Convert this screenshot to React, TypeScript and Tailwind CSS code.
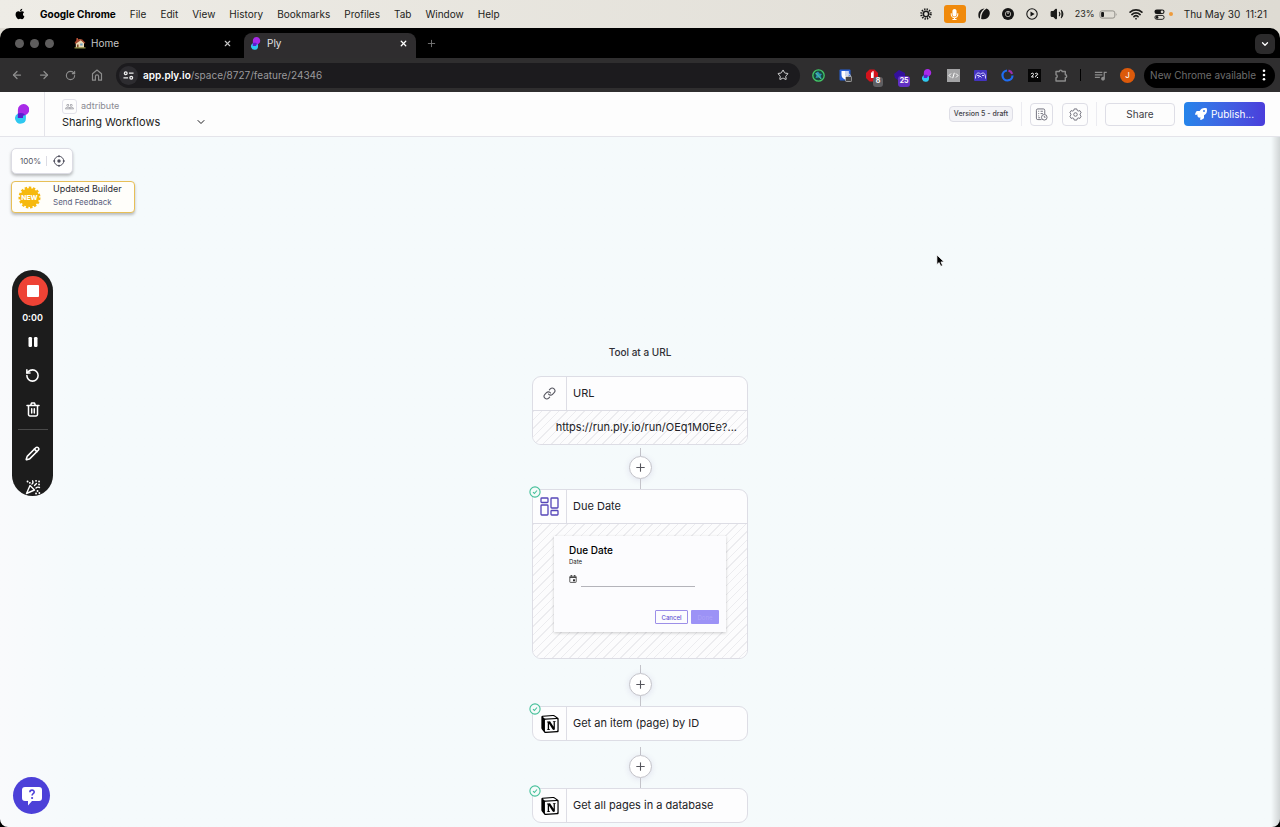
import type { ReactNode } from 'react';
import {
  ArrowLeft,
  ArrowRight,
  ChevronDown,
  CirclePlay,
  Link,
  Pencil,
  Plus,
  RotateCcw,
  RotateCw,
  Star,
  Volume2,
  Wifi,
  X,
} from 'lucide-react';
import { FaApple, FaMicrophone, FaRocket } from 'react-icons/fa';
import { MdOutlineQueueMusic, MdPeopleOutline } from 'react-icons/md';
import { SiNotion } from 'react-icons/si';

const menus = ['File', 'Edit', 'View', 'History', 'Bookmarks', 'Profiles', 'Tab', 'Window', 'Help'];

function PlyLogo({ className }: { className: string }) {
  return (
    <svg viewBox="0 0 14 20" className={className} aria-hidden="true">
      <path d="M3 9.500A5.400 5.400 0 1 0 10.900 14V9.500z" fill="#2fc8f0" />
      <path d="M2.900 14V5.800A5.700 5.700 0 1 1 8 11.400V14z" fill="#a82be8" />
      <path d="M2.900 9.600c1.800-1 4-.9 5.600 0l1.600 1.500c-.7.3-1.400.4-2.100.3V14H2.900z" fill="#5a20cf" />
    </svg>
  );
}

function HouseIcon() {
  return (
    <svg viewBox="0 0 12 12" className="size-3 shrink-0" aria-hidden="true">
      <path d="M1.800 5.500 6 2l4 3.500V11H1.800z" fill="#ead9b5" />
      <path d="M0.500 6 3 2.200h5L11.500 6l-1 .5L6.800 3.200 1.800 6.800z" fill="#a5482f" />
      <path d="M2.500 1h1.400v2.200H2.500z" fill="#c4573b" />
      <path d="M3 7.500h1.600V11H3z" fill="#7c4a2c" />
      <path d="M6.200 6.500h2.400v2H6.200z" fill="#6d9fc4" />
      <path d="M.5 10.200h11v1.300H.5z" fill="#8a8a40" />
    </svg>
  );
}

/* ---------- macOS menu bar ---------- */

function MenuBar() {
  return (
    <div className="flex h-7 items-center justify-between bg-linear-to-r from-[#eeece6] to-[#dedbd3] pl-[14px] pr-[13px] text-[10px] text-[#1d1d1b]">
      <nav className="flex items-center gap-[14px]">
        <FaApple size={12} className="text-black" />
        <span className="font-bold text-black">Google Chrome</span>
        {menus.map((m) => (
          <span key={m}>{m}</span>
        ))}
      </nav>
      <div className="flex items-center gap-[11px]">
        <div className="flex items-center gap-3">
          <svg viewBox="0 0 14 14" className="size-3" fill="none" stroke="#161616" aria-hidden="true">
            <circle cx="7" cy="7" r="3" strokeWidth="1.600" />
            <circle cx="7" cy="7" r="5.400" strokeWidth="2.600" strokeDasharray="1.500 1.330" />
          </svg>
          <span className="flex h-[18px] w-[22px] items-center justify-center rounded-[3px] bg-[#f08a0c] text-white">
            <FaMicrophone size={11} />
          </span>
          <svg viewBox="0 0 12 12" className="size-3" fill="#161616" aria-hidden="true">
            <path d="M.7 9.500C-.5 5 1.500 1 6.500.5 3 3.200 1.700 6 2 10.800z" />
            <path d="M3.200 11C3 6.500 5 2.500 8.500.500c3 .8 4 4 2.800 7C10.200 10.400 7 12 3.200 11z" />
          </svg>
          <svg viewBox="0 0 12 12" className="size-3" aria-hidden="true">
            <circle cx="6" cy="6" r="6" fill="#161616" />
            <circle cx="6" cy="6" r="2.700" fill="none" stroke="#aaa8a2" />
            <path d="M6 3.500V6" stroke="#e5e3dd" strokeWidth="1" />
          </svg>
          <svg viewBox="0 0 12 12" className="size-3" aria-hidden="true">
            <circle cx="6" cy="6" r="5.200" fill="none" stroke="#161616" strokeWidth="1.100" />
            <path d="M4.500 3.600v4.800L8.600 6z" fill="#161616" />
          </svg>
          <Volume2 size={14} fill="#1d1d1b" strokeWidth={2} />
        </div>
        <div className="flex items-center gap-1 text-[9px]">
          <span>23%</span>
          <svg viewBox="0 0 20 10" className="h-[9px] w-[19px]" aria-hidden="true">
            <rect x=".5" y="1" width="16.500" height="8" rx="2.200" fill="none" stroke="#8a8882" />
            <rect x="1.800" y="2.300" width="3.200" height="5.400" rx="1" fill="#161616" />
            <path d="M18.200 3.700v2.600c1-.3 1-2.300 0-2.600z" fill="#8a8882" />
          </svg>
        </div>
        <Wifi size={14} strokeWidth={3} />
        <div className="flex items-center gap-1">
          <svg viewBox="0 0 12 12" className="size-[11px]" aria-hidden="true">
            <rect x=".5" y=".5" width="11" height="5" rx="2.500" fill="#161616" />
            <circle cx="8.800" cy="3" r="1.500" fill="#dedbd3" />
            <rect x="1" y="7" width="10" height="4.300" rx="2.100" fill="none" stroke="#161616" />
            <circle cx="3.300" cy="9.200" r="1.500" fill="#161616" />
          </svg>
          <span className="size-1 rounded-full bg-[#ee9b3c]" />
        </div>
        <span className="whitespace-pre">Thu May 30  11:21</span>
      </div>
    </div>
  );
}

/* ---------- browser chrome ---------- */

function TabStrip() {
  return (
    <div className="flex h-[30px] items-end rounded-t-[10px] bg-black pl-[15px] text-[10px]">
      <div className="flex h-[30px] items-center gap-[6px]">
        <span className="size-[9px] rounded-full bg-[#5e5d5d]" />
        <span className="size-[9px] rounded-full bg-[#5e5d5d]" />
        <span className="size-[9px] rounded-full bg-[#5e5d5d]" />
      </div>
      <div className="ml-5 flex h-[30px] w-[158px] items-center gap-[5px] text-[#c6c6c6]">
        <HouseIcon />
        <span className="flex-1">Home</span>
        <button aria-label="Close Home"><X size={9} strokeWidth={3} /></button>
      </div>
      <div className="ml-3 flex h-[25px] w-[172px] items-center gap-[6px] rounded-t-lg bg-[#2f2d2f] pb-1 pl-[6px] pr-2 text-[#e2e2e2]">
        <PlyLogo className="h-[13px] w-[11px]" />
        <span className="flex-1">Ply</span>
        <button aria-label="Close Ply" className="text-white"><X size={9} strokeWidth={3.500} /></button>
      </div>
      <button aria-label="New tab" className="ml-[10px] flex h-[30px] items-center text-[#777]">
        <Plus size={11} />
      </button>
      <button
        aria-label="Search tabs"
        className="mb-1 ml-auto mr-[5px] flex size-5 items-center justify-center rounded-md bg-[#2c2b2c] text-white"
      >
        <ChevronDown size={10} strokeWidth={3} />
      </button>
    </div>
  );
}

function Extensions() {
  return (
    <div className="flex items-center gap-[14px] text-[#8b8b8b] *:size-[13px] *:shrink-0">
      <svg viewBox="0 0 13 13" aria-hidden="true">
        <circle cx="6.500" cy="6.500" r="5.700" fill="#17473d" stroke="#43c667" strokeWidth="1.300" />
        <path d="M3 4.500 6 2.500l1.500 2L10 5 8.500 7l1.500 3-3-1.500L3.500 9l1-2.500z" fill="#2f91b5" />
        <path d="m4 4 5 6" stroke="#5be07e" strokeWidth=".8" />
      </svg>
      <svg viewBox="0 0 13 13" aria-hidden="true">
        <rect x=".5" y=".5" width="11" height="11" rx="1" fill="#2760d8" />
        <path d="M2.500 2h7v4c0 2-1.500 3.500-3.500 4.500C4 9.500 2.500 8 2.500 6z" fill="#fff" />
        <path d="M6 2h3.500v5H6z" fill="#c9d6f2" />
        <rect x="6.500" y="7.500" width="6.200" height="5" rx="1" fill="#444" stroke="#ddd" strokeWidth=".6" />
        <path d="M8 7.500V6.600a1.600 1.600 0 0 1 3.200 0v.9" stroke="#ddd" fill="none" />
      </svg>
      <div className="relative">
        <svg viewBox="0 0 13 13" aria-hidden="true">
          <path d="M3.500.5h5L12 4v5l-3.500 3.500h-5L0 9V4z" fill="#d3131c" />
          <path d="M5 9V4c0-.9 1.300-.9 1.300 0V2.600c0-.9 1.400-.9 1.400 0V9z" fill="#fff" />
        </svg>
        <span className="absolute -bottom-[5px] -right-[4px] flex size-[10px] items-center justify-center rounded-[3px] bg-[#5f5f62] text-[7px] font-bold text-white">
          8
        </span>
      </div>
      <div className="relative">
        <svg viewBox="0 0 13 13" aria-hidden="true">
          <path d="m1 5 5-4 6 3v6L6 12 2 9z" fill="#33109c" />
        </svg>
        <span className="absolute -bottom-[5px] -right-[4px] flex h-[11px] w-3 items-center justify-center rounded-[3px] bg-[#6230c4] text-[7px] font-bold text-white">
          25
        </span>
      </div>
      <PlyLogo className="" />
      <svg viewBox="0 0 13 13" aria-hidden="true">
        <rect width="13" height="13" fill="#a3a3a5" />
        <path d="M4 4.500 2 6.500l2 2M9 4.500l2 2-2 2M7.300 3.800 5.700 9.200" fill="none" stroke="#fff" />
      </svg>
      <svg viewBox="0 0 13 13" aria-hidden="true">
        <rect y="1" width="13" height="11" rx="1" fill="#4433c0" />
        <path d="M1.500 9.500C1.500 5 3 4 4.500 4s1.500 1 2 1 1-1 2.500-1 2.500 1.500 2.500 5.500M3 6.500h2.500M8 6.500h2M4 8.500l2-1.500 1.500 1.500" fill="none" stroke="#d9d4ff" />
      </svg>
      <svg viewBox="0 0 13 13" fill="none" strokeWidth="2.200" aria-hidden="true">
        <path d="M6 1.500a5 5 0 1 0 5.500 5" stroke="#1f6df2" />
        <path d="M7.500 1.600a5 5 0 0 1 3.700 3.200" stroke="#9b2fae" />
      </svg>
      <svg viewBox="0 0 13 13" aria-hidden="true">
        <rect width="13" height="13" fill="#050505" />
        <path d="M3 5.200c.5-1.500 3-1.200 2.500.3L3.500 8h2.300M7 5c1-1.500 3.500-.7 2.500.8L8 6.500 7.500 8.200M9 8.500h1" fill="none" stroke="#fff" />
      </svg>
      <svg viewBox="0 0 13 13" fill="none" stroke="currentColor" strokeWidth="1.400" strokeLinejoin="round" aria-hidden="true">
        <path d="M1 2.500h3.300a1.400 1.400 0 0 1 2.800 0h3.200v3.300a1.400 1.400 0 0 1 0 2.800V12H1V8.800c1.700-.2 1.700-2.900 0-3.100z" />
      </svg>
    </div>
  );
}

function Toolbar() {
  return (
    <div className="flex h-[34px] items-center bg-[#2f2e2f] pl-[11px] pr-[5px] text-[#8d8d8d]">
      <div className="flex items-center gap-[15px]">
        <button aria-label="Back"><ArrowLeft size={12} strokeWidth={2.500} /></button>
        <button aria-label="Forward"><ArrowRight size={12} strokeWidth={2.500} /></button>
        <button aria-label="Reload"><RotateCw size={11} strokeWidth={2.500} /></button>
        <button aria-label="Home">
          <svg viewBox="0 0 12 12" className="size-3" fill="none" stroke="currentColor" strokeWidth="1.200" strokeLinejoin="round" aria-hidden="true">
            <path d="M1.500 4.800 6 1l4.500 3.800v6.400H7.600V7.500a1.600 1.600 0 0 0-3.200 0v3.700H1.500z" />
          </svg>
        </button>
      </div>
      <div className="ml-[13px] flex h-[25px] min-w-0 flex-1 items-center rounded-full bg-[#1c1b1e] pl-[3px] pr-[11px] text-[10px]">
        <span className="mr-[5px] flex size-[19px] shrink-0 items-center justify-center rounded-full bg-[#2d2c30]">
          <svg viewBox="0 0 12 12" className="size-[11px]" fill="none" stroke="#f0f0f0" strokeWidth="1.400" aria-hidden="true">
            <circle cx="3" cy="3.500" r="1.500" />
            <path d="M6.500 3.500h5M.5 8.500h5" />
            <circle cx="9" cy="8.500" r="1.500" />
          </svg>
        </span>
        <span className="flex-1 text-[#9a999c]">
          <span className="font-semibold text-white">app.ply.io</span>/space/8727/feature/24346
        </span>
        <button aria-label="Bookmark" className="text-[#d8d8d8]"><Star size={12} /></button>
      </div>
      <div className="ml-3 flex items-center">
        <Extensions />
        <span className="mx-3 h-3 w-px bg-black" />
        <MdOutlineQueueMusic size={15} />
        <span className="ml-3 flex size-[15px] items-center justify-center rounded-full bg-[#dc5a0b] text-[8px] text-white">
          J
        </span>
        <button className="ml-[9px] flex h-[25px] items-center gap-[6px] rounded-full bg-black pl-[6px] pr-[9px] text-[10px] text-[#6d6d6d]">
          New Chrome available
          <svg viewBox="0 0 4 12" className="h-3 w-1" fill="#fff" aria-hidden="true">
            <circle cx="2" cy="1.800" r="1.300" />
            <circle cx="2" cy="6" r="1.300" />
            <circle cx="2" cy="10.200" r="1.300" />
          </svg>
        </button>
      </div>
    </div>
  );
}

/* ---------- Ply app ---------- */

function AppHeader() {
  return (
    <header className="flex h-[45px] items-stretch border-b border-[#e4e4ea] bg-[#fdfdfd] pr-[15px] text-[#3e3e46]">
      <div className="flex w-[45px] items-center justify-center border-r border-[#e4e4ea]">
        <PlyLogo className="h-5 w-[14px]" />
      </div>
      <div className="ml-[17px] flex flex-col justify-center pt-px">
        <div className="flex h-[15px] items-center gap-1 text-[9px] text-[#8a8a92]">
          <span className="flex size-[15px] items-center justify-center rounded-[3px] border border-[#e2e2ea]">
            <MdPeopleOutline size={9} />
          </span>
          adtribute
        </div>
        <button className="flex h-[17px] w-[145px] items-center justify-between text-[11px] text-[#1c1c20]">
          Sharing Workflows
          <ChevronDown size={12} />
        </button>
      </div>
      <div className="ml-auto flex items-center">
        <span className="flex h-4 w-16 items-center justify-center rounded-[4px] border border-[#dedee6] bg-[#f3f3f7] text-[7px] font-medium">
          Version 5 - draft
        </span>
        <span className="mx-2 h-6 w-px bg-[#ececf1]" />
        <button aria-label="History" className="flex size-[23px] items-center justify-center rounded-[4px] border border-[#dedee6] text-[#6a6a76]">
          <svg viewBox="0 0 14 14" className="size-[13px]" fill="none" stroke="currentColor" aria-hidden="true">
            <path d="M7 12.500H3A1.500 1.500 0 0 1 1.500 11V2.500A1.500 1.500 0 0 1 3 1h6a1.500 1.500 0 0 1 1.500 1.500v4M3.500 3.500h1M6 3.500h2.500M3.500 6h1M6 6h2.500M3.500 8.500h1M3.500 10.500h2" />
            <circle cx="10" cy="10" r="3" />
            <path d="M10 8.500V10h1.300" />
          </svg>
        </button>
        <button aria-label="Settings" className="ml-[9px] flex h-[23px] w-[26px] items-center justify-center rounded-[4px] border border-[#dedee6] text-[#6a6a76]">
          <svg viewBox="0 0 14 14" className="size-[13px]" fill="none" stroke="currentColor" strokeLinejoin="round" aria-hidden="true">
            <path d="M5.600 1h2.800l.5 1.700 1 .6 1.800-.5 1.400 2.400L11.900 6.400v1.200l1.200 1.200-1.400 2.400-1.800-.5-1 .6-.5 1.700H5.600l-.5-1.700-1-.6-1.800.5L.9 8.800l1.200-1.200V6.400L.9 5.200l1.400-2.400 1.800.5 1-.6z" />
            <circle cx="7" cy="7" r="1.900" />
          </svg>
        </button>
        <span className="mx-2 h-6 w-px bg-[#ececf1]" />
        <button className="h-[23px] w-[70px] rounded-[4px] border border-[#dedee6] text-[10px]">Share</button>
        <button className="ml-[9px] flex h-6 w-[81px] items-center justify-center gap-1 rounded-[4px] bg-linear-to-r from-[#2484ea] to-[#4a3ddb] text-[10px] text-white">
          <FaRocket size={12} />
          Publish...
        </button>
      </div>
    </header>
  );
}

function ZoomControl() {
  return (
    <div className="flex h-[26px] w-[62px] items-center rounded-[5px] border border-[#dcdce4] bg-white pl-2 text-[8px] text-[#55555f] shadow-[0_2px_3px_rgba(0,0,0,0.25)]">
      <span className="w-[26px]">100%</span>
      <span className="h-[10px] w-px bg-[#dcdce4]" />
      <button aria-label="Recenter" className="ml-[6px]">
        <svg viewBox="0 0 12 12" className="size-3" fill="none" stroke="#4e4e5c" aria-hidden="true">
          <circle cx="6" cy="6" r="4.700" />
          <circle cx="6" cy="6" r="1.700" fill="#4e4e5c" stroke="none" />
          <path d="M6 0v2.200M6 9.800V12M0 6h2.200M9.800 6H12" />
        </svg>
      </button>
    </div>
  );
}

function FeedbackCard() {
  return (
    <div className="flex h-8 w-[124px] items-center rounded-[4px] border border-[#e7bf57] bg-[#fffefa] pl-[6px] shadow-[0_2px_3px_rgba(0,0,0,0.25)]">
      <svg viewBox="0 0 24 24" className="size-[23px] shrink-0" aria-hidden="true">
        <circle cx="12" cy="12" r="10" fill="#f6b90f" />
        <circle cx="12" cy="12" r="10" fill="none" stroke="#f6b90f" strokeWidth="3" strokeDasharray="2.500 1.690" />
        <text x="12" y="14.700" textAnchor="middle" fontSize="7" fontWeight="800" fill="#fff">NEW</text>
      </svg>
      <div className="ml-3 flex flex-col pb-1">
        <span className="text-[9px] leading-[14px] text-[#2c2c33]">Updated Builder</span>
        <a href="#feedback" className="text-[8px] leading-[13px] text-[#5a5f7c]">Send Feedback</a>
      </div>
    </div>
  );
}

function Recorder() {
  return (
    <div className="flex h-[226px] w-[41px] flex-col items-center overflow-hidden rounded-full bg-[#1c1c1c] pt-[6px] text-white">
      <button aria-label="Stop recording" className="flex size-[30px] shrink-0 items-center justify-center rounded-full bg-[#ee4335]">
        <span className="size-3 rounded-[1px] bg-white" />
      </button>
      <span className="mt-1 h-4 shrink-0 text-[9px] font-semibold leading-4">0:00</span>
      <button aria-label="Pause" className="flex h-8 shrink-0 items-center">
        <svg viewBox="0 0 10 12" className="h-3 w-[10px]" fill="#fff" aria-hidden="true">
          <rect x=".5" y="1" width="3.500" height="10" rx="1.200" />
          <rect x="6" y="1" width="3.500" height="10" rx="1.200" />
        </svg>
      </button>
      <button aria-label="Restart" className="flex h-[34px] shrink-0 items-center">
        <RotateCcw size={15} strokeWidth={2.500} />
      </button>
      <button aria-label="Delete" className="flex h-[34px] shrink-0 items-center">
        <svg viewBox="0 0 14 15" className="h-[15px] w-[14px]" fill="none" stroke="#fff" strokeWidth="1.500" strokeLinecap="round" strokeLinejoin="round" aria-hidden="true">
          <path d="M1 3.500h12M4.700 3.300 5.500 1h3l.8 2.300M2.500 3.700V12.500a1.500 1.500 0 0 0 1.500 1.500h6a1.500 1.500 0 0 0 1.500-1.500V3.700M5.700 6.700v4.200M8.300 6.700v4.200" />
        </svg>
      </button>
      <span className="mb-[6px] mt-[3px] h-px w-[30px] shrink-0 bg-[#4a4a4a]" />
      <button aria-label="Draw" className="flex h-[34px] shrink-0 items-center">
        <Pencil size={15} strokeWidth={2.500} />
      </button>
      <button aria-label="Confetti" className="flex h-[34px] shrink-0 items-center">
        <svg viewBox="0 0 16 16" className="size-4" fill="none" stroke="#fff" strokeWidth="1.400" strokeLinecap="round" strokeLinejoin="round" aria-hidden="true">
          <path d="M5 6.500 1.500 14.500 9.500 11zM7 5c1.200-.8 1.200-2 .6-3.200M11 9c1-1 2.400-1 3.500-.5M9.500 6.500l2-2" />
          <path d="M2.500 2.500h.1M4.800 3.800h.1M11 1.800h.1M14 2.500h.1M14 5.500h.1M12.500 12h.1M14.300 14h.1M11 14.500h.1" strokeWidth="1.800" />
        </svg>
      </button>
    </div>
  );
}

const hatch =
  'bg-[repeating-linear-gradient(135deg,#ececef_0,#ececef_1px,#fcfcfd_1px,#fcfcfd_6px)]';

interface StepProps {
  icon: ReactNode;
  title: string;
  done?: boolean;
  children?: ReactNode;
}

function Step({ icon, title, done, children }: StepProps) {
  return (
    <section className="relative w-[216px] rounded-[9px] border border-[#dddde5] bg-[#fdfdfe]">
      <div className="flex h-[33px] items-stretch text-[11px] text-[#222226]">
        <div className="flex w-[34px] items-center justify-center border-r border-[#dddde5]">{icon}</div>
        <h3 className="flex items-center pl-[6px]">{title}</h3>
      </div>
      {children}
      {done && (
        <svg viewBox="0 0 12 12" className="absolute -left-[4px] -top-[4px] size-3" aria-hidden="true">
          <circle cx="6" cy="6" r="5.100" fill="#f5fbfa" stroke="#45c09a" strokeWidth="1.100" />
          <path d="m4 6.200 1.400 1.300 2.600-3" fill="none" stroke="#45c09a" strokeWidth="1.100" />
        </svg>
      )}
    </section>
  );
}

function Connector({ first }: { first?: boolean }) {
  return (
    <div className={first ? 'flex h-11 w-[23px] flex-col items-center pt-[3px]' : 'flex h-[47px] w-[23px] flex-col items-center pt-[6px]'}>
      <span className="h-2 w-px bg-[#c4c4ca]" />
      <button
        aria-label="Add step"
        className="flex size-[23px] items-center justify-center rounded-full border border-[#c4c4ca] bg-white text-[#55555c] shadow-[0_1px_6px_rgba(80,60,140,0.12)]"
      >
        <Plus size={13} strokeWidth={2} />
      </button>
      <span className="w-px flex-1 bg-[#c4c4ca]" />
    </div>
  );
}

function DueDatePreview() {
  return (
    <div className="mx-[21px] h-24 bg-[#fcfcfe] px-[7px] pt-2 shadow-[0_1px_3px_rgba(0,0,0,0.2)]">
      <div className="pl-2">
        <h4 className="text-[10px] font-medium leading-[13px] text-black">Due Date</h4>
        <label htmlFor="due" className="block text-[6px] leading-[10px] text-[#222]">Date</label>
        <div className="mt-1 flex h-4 items-center gap-1">
          <svg viewBox="0 0 8 8" className="size-2" fill="none" stroke="#333" strokeWidth=".8" aria-hidden="true">
            <rect x=".8" y="1.200" width="6.400" height="6.200" rx=".6" />
            <path d="M.8 2.400h6.400M2.300 0v1.500M5.700 0v1.500" strokeWidth="1" />
            <rect x="4" y="4.300" width="2" height="2" fill="#333" stroke="none" />
          </svg>
          <input id="due" type="text" className="h-4 w-[114px] border-b border-[#b4b4ba] bg-transparent text-[6px] outline-none" />
        </div>
      </div>
      <div className="mt-[23px] flex justify-end gap-[3px] text-[6px]">
        <button className="h-[14px] w-[33px] rounded-[1px] border border-[#9c8fe8] font-medium text-[#6250d2]">Cancel</button>
        <button className="h-[14px] w-7 rounded-[1px] bg-[#9c92f6] text-[#aca3f8]">Done</button>
      </div>
    </div>
  );
}

function WidgetIcon() {
  return (
    <svg viewBox="0 0 19 19" className="size-[19px]" fill="none" stroke="#5546b8" strokeWidth="1.300" aria-hidden="true">
      <rect x="1" y="1" width="7" height="4.500" rx=".8" />
      <rect x="1" y="8" width="7" height="10" rx=".8" />
      <rect x="11" y="1" width="7" height="10" rx=".8" />
      <rect x="11" y="13.500" width="7" height="4.500" rx=".8" />
    </svg>
  );
}

function Canvas() {
  return (
    <main className="relative flex flex-1 flex-col items-center bg-linear-to-r from-[#f9fafc] from-0% via-[#f5fafc] via-6% to-[#f5fafb] pb-1 pt-[207px]">
      <h2 className="mb-4 text-[10px] font-medium leading-4 text-[#303036]">Tool at a URL</h2>
      <Step title="URL" icon={<Link size={13} className="text-[#55555f]" />}>
        <div className={`flex h-[34px] items-center justify-end rounded-b-[8px] border-t border-[#dddde5] pr-[10px] text-[11px] text-[#222226] ${hatch}`}>
          https://run.ply.io/run/OEq1M0Ee?...
        </div>
      </Step>
      <Connector first />
      <Step title="Due Date" done icon={<WidgetIcon />}>
        <div className={`rounded-b-[8px] border-t border-[#dddde5] pb-[26px] pt-3 ${hatch}`}>
          <DueDatePreview />
        </div>
      </Step>
      <Connector />
      <Step title="Get an item (page) by ID" done icon={<SiNotion size={18} className="text-black" />} />
      <Connector />
      <Step title="Get all pages in a database" done icon={<SiNotion size={18} className="text-black" />} />

      {/* floating tools */}
      <div className="absolute left-[11px] top-[11px] flex flex-col gap-[7px]">
        <ZoomControl />
        <FeedbackCard />
      </div>
      <div className="absolute left-3 top-[133px]">
        <Recorder />
      </div>
      <button
        aria-label="Help"
        className="absolute bottom-[13px] left-[13px] flex size-[37px] items-center justify-center rounded-full bg-[#4c40d8]"
      >
        <svg viewBox="0 0 22 20" className="h-5 w-[22px]" aria-hidden="true">
          <path d="M4 1h14a3 3 0 0 1 3 3v8a3 3 0 0 1-3 3h-7l-4 4.500V15H4a3 3 0 0 1-3-3V4a3 3 0 0 1 3-3z" fill="#fff" />
          <path d="M8.900 6.200c0-2.700 4.300-2.700 4.300-.1 0 1.600-2.100 1.600-2.100 3.300" fill="none" stroke="#4c40d8" strokeWidth="1.600" />
          <circle cx="11.100" cy="12" r="1.100" fill="#4c40d8" />
        </svg>
      </button>
      <div className="absolute inset-y-0 right-0 w-[9px] bg-linear-to-r from-transparent to-black/15" />
      <svg viewBox="0 0 10 15" className="absolute right-[335px] top-[117px] h-[14px] w-[9px]" aria-hidden="true">
        <path d="M1 .8v10.700l2.500-2.300 1.800 4.200 2-.9-1.800-4H9z" fill="#000" stroke="#fff" strokeWidth=".8" />
      </svg>
    </main>
  );
}

export default function App() {
  return (
    <div className="flex min-h-screen flex-col bg-black font-['Inter','Noto_Sans',sans-serif]">
      <div className="bg-[#dedbd3]">
        <MenuBar />
        <TabStrip />
      </div>
      <Toolbar />
      <div className="flex flex-1 flex-col overflow-hidden rounded-b-[8px]">
        <AppHeader />
        <Canvas />
      </div>
    </div>
  );
}
